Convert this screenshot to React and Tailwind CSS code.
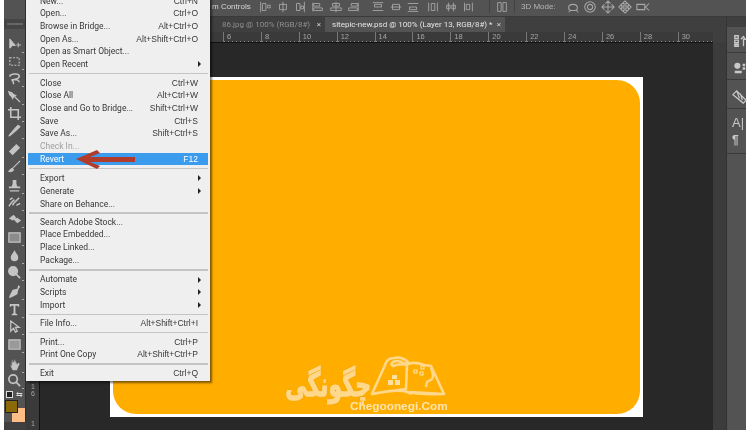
const menuGroups = [
  { gap: 5.8, rows: [['New...', 'Ctrl+N'], ['Open...', 'Ctrl+O'], ['Browse in Bridge...', 'Alt+Ctrl+O'], ['Open As...', 'Alt+Shift+Ctrl+O'], ['Open as Smart Object...'], ['Open Recent', null, true]] },
  { gap: 6.8, rows: [['Close', 'Ctrl+W'], ['Close All', 'Alt+Ctrl+W'], ['Close and Go to Bridge...', 'Shift+Ctrl+W'], ['Save', 'Ctrl+S'], ['Save As...', 'Shift+Ctrl+S'], ['Check In...', null, false, 'off'], ['Revert', 'F12', false, 'on']] },
  { gap: 5.5, rows: [['Export', null, true], ['Generate', null, true], ['Share on Behance...']] },
  { gap: 7, rows: [['Search Adobe Stock...'], ['Place Embedded...'], ['Place Linked...'], ['Package...']] },
  { gap: 5.8, rows: [['Automate', null, true], ['Scripts', null, true], ['Import', null, true]] },
  { gap: 5.6, rows: [['File Info...', 'Alt+Shift+Ctrl+I']] },
  { gap: 6.2, rows: [['Print...', 'Ctrl+P'], ['Print One Copy', 'Alt+Shift+Ctrl+P']] },
  { gap: 0, rows: [['Exit', 'Ctrl+Q']] },
];

const tools = [
  <path d="M3 2v10l3-3h3zM12 6v5M10 8.5h5" fill="currentColor" stroke="currentColor" strokeWidth="1" />,
  <path d="M3 4h10v8H3z" fill="none" stroke="currentColor" strokeDasharray="2 1.5" strokeWidth="1.2" />,
  <path d="M3 6c0-3 9-4 10-1s-6 5-8 4M5 9c1 2 2 2 2 5M8 9c2 0 5 1 5 3" fill="none" stroke="currentColor" strokeWidth="1.6" />,
  <path d="M2 3l3 1 2 2 2 1-2 1-1 2-1-2-2-2zM8 8l6 6" fill="currentColor" stroke="currentColor" strokeWidth="1.4" />,
  <path d="M4 1v11h11M1 4h11v11" fill="none" stroke="currentColor" strokeWidth="1.7" />,
  <path d="M12 2l2 2-3 3-2-2zM9 5l-6 7-1 2 2-1 7-6" fill="currentColor" stroke="currentColor" strokeWidth="1" />,
  <path d="M10 2l4 4-8 8-4-4z" fill="currentColor" />,
  <path d="M14 2L7 9l-1 1M6 10c-2 0-2 2-4 3 2 1 5 0 5-2" fill="currentColor" stroke="currentColor" strokeWidth="1.2" />,
  <path d="M6 2h4v4l1 3h3v2H2V9h3l1-3zM3 13h10v1.500H3z" fill="currentColor" />,
  <path d="M2 12c2-3 3-5 6-7M13 3L7 9l-1 2M3 5l3-2M10 11l4-2" fill="none" stroke="currentColor" strokeWidth="1.6" />,
  <path d="M2 7l5-4 3 3-4 3zM7 8l4-2 4 3-4 3z" fill="currentColor" />,
  <path d="M2 3h12v10H2z" fill="#8b8b8b" stroke="currentColor" strokeWidth="1.3" />,
  <path d="M8 2c1 3 4 5 4 8a4 4 0 01-8 0c0-3 3-5 4-8z" fill="currentColor" />,
  <path d="M6.500 2a4.500 4.500 0 110 9 4.500 4.500 0 010-9zM10 10l4 4" fill="currentColor" stroke="currentColor" strokeWidth="1.8" />,
  <path d="M12 1l2 2-2 3-1 5-6 3-3 1 1-3 3-6 5-1z" fill="currentColor" />,
  <path d="M3 2h10v3h-1l-1-1H9v8l2 1v1H5v-1l2-1V4H5L4 5H3z" fill="currentColor" />,
  <path d="M4 2v11l3-3 2 4 2-1-2-4h4z" fill="none" stroke="currentColor" strokeWidth="1.300" />,
  <path d="M2 3h12v10H2z" fill="#9a9a9a" stroke="currentColor" strokeWidth="1.200" />,
  <path d="M3 8l2 2V4l1 3V2l1.500 5V2L9 7V3l1.500 5 2-2 1 1-3 7H6z" fill="currentColor" />,
  <path d="M6.500 2a4.500 4.500 0 110 9 4.500 4.500 0 010-9zM10 10l4 4" fill="none" stroke="currentColor" strokeWidth="1.800" />,
];

const toolGaps = ['mt-[7px]', 'mt-[0px]', 'mt-[0px]', 'mt-[1px]', 'mt-[0px]', 'mt-[0px]', 'mt-[2px]', 'mt-[0px]', 'mt-[2px]', 'mt-[0px]', 'mt-[0px]', 'mt-[1px]', 'mt-[1px]', 'mt-[0px]', 'mt-[2px]', 'mt-[1px]', 'mt-[0px]', 'mt-[1px]', 'mt-[3px]', 'mt-[-1px]'];

const rulerMarks = [6, 8, 10, 12, 14, 16, 18, 20, 22, 24, 26, 28, 30];

const alignGroups = [
  { cls: 'ml-[10px]', icons: ['M3 2v12M5 4h4v8H5zM11 6h3v3h-3z', 'M8 2v12M4 5h8v6H4z', 'M13 2v12M4 4h4v8H4zM9 7h3v3H9z'] },
  { cls: 'ml-[4px]', icons: ['M2 3v10M3 4h7v3H3zM3 9h10v3H3z', 'M8 2v12M4 4h8v3H4zM2 9h12v3H2z', 'M14 3v10M6 4h7v3H6zM3 9h10v3H3z'] },
  { cls: 'ml-[11px]', icons: ['M2 3h12M4 5h8v3H4zM2 12h12', 'M2 8h12M4 5h8v6H4z', 'M2 13h12M4 8h8v3H4zM2 4h12'] },
  { cls: 'ml-[6px]', icons: ['M3 3v10M6 4h4v8H6zM13 3v10', 'M5 3v10M11 3v10M3 6h4v4H3zM9 6h4v4H9z', 'M13 3v10M4 3v10M6 5h4v6H6z'] },
];

const threeDIcons = [
  'M3 9c0-3 3-4 5-4 3 0 5 1 5 4s-3 3-5 3-5 0-5-3zM11 11l3 3M5 12l-2 2',
  'M8 2a6 6 0 110 12A6 6 0 018 2zM8 5a3 3 0 110 6 3 3 0 010-6z',
  'M8 1v14M1 8h14M5 4l3-3 3 3M5 12l3 3 3-3M4 5L1 8l3 3M12 5l3 3-3 3',
  'M8 1l3 3H9v3h3V5l3 3-3 3V9H9v3h2l-3 3-3-3h2V9H4v2L1 8l3-3v2h3V4H5z',
  'M1 5h9v6H1zM15 4l-4 4 4 4',
];

function ToolIcon({ children, mt }) {
  return (
    <div className={`relative flex h-[17px] w-[18px] items-center justify-center text-[#c4c4c4] ${mt}`}>
      <svg viewBox="0 0 16 16" className="h-[15px] w-[15px]">{children}</svg>
      <span className="absolute bottom-0 right-0 h-[1px] w-[2px] bg-[#aaaaaa]" />
    </div>
  );
}

function ToolPanel() {
  return (
    <div className="flex w-[22px] shrink-0 flex-col items-center border-r border-[#2e2e2e] bg-[#535353] pt-[19px]">
      <div className="flex h-[10px] w-full items-start bg-[#454545]">
        <div className="mt-[4px] ml-[3px] h-[2px] w-[16px] bg-[#666666]" />
      </div>
      {tools.map((tool, i) => (
        <ToolIcon key={i} mt={toolGaps[i] || ''}>{tool}</ToolIcon>
      ))}
      <div className="mt-[2px] flex w-full justify-between px-[2px] text-[#dddddd]">
        <span className="h-[7px] w-[7px] border border-[#dddddd] bg-[#222222]" />
        <span className="text-[8px] leading-[8px]">⇆</span>
      </div>
      <div className="relative mt-[1px] h-[22px] w-[20px]">
        <span className="absolute left-[7px] top-[8px] h-[14px] w-[13px] bg-[#ffbe85]" />
        <span className="absolute left-0 top-0 h-[13px] w-[13px] border border-[#222222] bg-[#8a6a06]" />
      </div>
    </div>
  );
}

function MenuRow({ label, shortcut, sub, state }) {
  const on = state === 'on';
  return (
    <div className={`mx-[2px] flex h-[12.7px] items-center justify-between pl-[12px] pr-[10px] text-[8.5px] leading-none ${on ? 'bg-[#3b9cee] text-white' : state === 'off' ? 'text-[#a0a0a0]' : 'text-[#383838]'}`}>
      <span className="font-['Roboto',sans-serif]">{label}</span>
      {shortcut && <span>{shortcut}</span>}
      {sub && <span className="mr-[-3px] h-0 w-0 border-y-[3px] border-l-[3px] border-y-transparent border-l-[#222222]" />}
    </div>
  );
}

function FileMenu() {
  return (
    <div className="absolute left-[22px] top-[-5.5px] z-10 w-[184px] bg-[#efefef] pb-[1px] font-['Liberation_Sans',sans-serif] shadow-[2px_2px_2px_rgba(0,0,0,0.5)]">
      {menuGroups.map((group, i) => (
        <div key={i}>
          {group.rows.map(([label, shortcut, sub, state]) => (
            <MenuRow key={label} label={label} shortcut={shortcut} sub={sub} state={state} />
          ))}
          {group.gap > 0 && (
            <div className="flex items-center pl-[3px] pr-[2px]" style={{ height: group.gap }}>
              <div className="h-[1.5px] w-full bg-[#c4c4c4]" />
            </div>
          )}
        </div>
      ))}
      <svg viewBox="0 0 62 22" className="absolute left-[49px] top-[154px] h-[22px] w-[62px]">
        <path d="M1 10L22 1l3 3-10 4h45v5H15l10 4-3 3z" fill="#b23c2b" />
      </svg>
    </div>
  );
}

function OptionsBar() {
  return (
    <div className="flex h-[17px] shrink-0 items-center border-b border-[#3a3a3a] bg-[#535353] pb-[3px] pl-[208px] font-['Liberation_Sans',sans-serif] text-[#d6d6d6]">
      <span className="w-[36px] shrink-0 whitespace-nowrap text-[8px] leading-none">m Controls</span>
      {alignGroups.map((group, i) => (
        <div key={i} className={`flex gap-[3.500px] text-[#a8a8a8] ${group.cls}`}>
          {group.icons.map(d => <AlignIcon key={d} d={d} />)}
        </div>
      ))}
      <div className="ml-[14px] flex h-full items-center border-x border-[#424242] px-[5px] text-[#a8a8a8]">
        <AlignIcon d="M3 3h4v10H3zM9 3h4v10H9z" />
      </div>
      <span className="ml-[6px] whitespace-nowrap text-[8px] leading-none text-[#b4b4b4]">3D Mode:</span>
      <div className="ml-[10px] flex gap-[3.500px] text-[#a8a8a8]">
        {threeDIcons.map(d => (
          <svg key={d} viewBox="0 0 16 16" className="h-[14px] w-[14px]"><path d={d} fill="none" stroke="currentColor" strokeWidth="1.200" /></svg>
        ))}
      </div>
    </div>
  );
}

function AlignIcon({ d }) {
  return (
    <svg viewBox="0 0 16 16" className="h-[14px] w-[14px] shrink-0">
      <path d={d} fill="none" stroke="currentColor" strokeWidth="1" />
    </svg>
  );
}

function TabBar() {
  return (
    <div className="flex h-[15px] shrink-0 items-stretch bg-[#3f3f3f] pl-[214px] font-['Roboto',sans-serif] text-[8px] leading-none">
      <div className="flex w-[107px] items-center justify-between pl-[4px] pr-[4px] text-[#8f8f8f]">
        <span className="whitespace-nowrap">86.jpg @ 100% (RGB/8#)</span>
        <span className="text-[#d0d0d0]">×</span>
      </div>
      <div className="flex w-[180px] items-center justify-between bg-[#535353] pl-[7px] pr-[4px] text-[#e4e4e4]">
        <span className="whitespace-nowrap">sitepic-new.psd @ 100% (Layer 13, RGB/8#) *</span>
        <span className="text-[#d0d0d0]">×</span>
      </div>
    </div>
  );
}

function Ruler() {
  return (
    <div className="mr-[13px] flex h-[11px] shrink-0 items-end overflow-hidden border-b border-[#111111] bg-[#3a3a3a] pl-[219px] font-['Liberation_Sans',sans-serif]">
      {rulerMarks.map(n => (
        <div key={n} className="relative h-full w-[37.9px] shrink-0 border-l border-[#777777]">
          <span className="absolute left-[3px] top-[1px] text-[7.500px] leading-none text-[#a6a6a6]">{n}</span>
          <span className="absolute bottom-0 left-0 h-[1px] w-full bg-[repeating-linear-gradient(90deg,#8a8a8a_0,#8a8a8a_1px,transparent_1px,transparent_4px)]" />
        </div>
      ))}
    </div>
  );
}

function VerticalRuler() {
  return (
    <div className="flex w-[14px] shrink-0 flex-col gap-[23px] border-r border-[#111111] bg-[#3a3a3a] pl-[5px] pt-[340px] text-[7px] leading-[7px] text-[#a6a6a6]">
      <span>1<br />6</span>
      <span>1</span>
    </div>
  );
}

function Logo() {
  return (
    <div className="absolute left-[173px] top-[269px] h-[72px] w-[164px]">
      <svg viewBox="0 0 164 72" className="absolute inset-0 h-full w-full">
        {/* book pages and reader */}
        <path d="M89 48L102 19c1-4 4-7 9-7 5-1 10 0 14 4l-3 2c-4-3-8-4-12-2-2 1-2 3 0 4 5-2 10-2 14-1l-1 24-29 4zM125 18c5-2 11-1 16 1l7 1 13 28-34-2c3 2 0 2-3 0l-3-2M89 48c12-2 24-5 36-2 12 3 24 2 36 2" fill="none" stroke="#ffd88c" strokeWidth="2.600" strokeLinejoin="round" />
        <path d="M148 22c2 5 3 8 1 11l-5 3-1 5" fill="none" stroke="#ffd88c" strokeWidth="2.400" />
        {/* squares on the pages */}
        <path d="M109 29h5v4h-5zM105 34h5v5h-5zM112 34h5v5h-5z" fill="#ffe0a3" />
        <path d="M138 20h3v3h-3zM131 24h3v3h-3zM137 26h3v3h-3z" fill="none" stroke="#ffe0a3" strokeWidth="1.200" />
      </svg>
      <span dir="rtl" className="absolute right-[76px] top-[28px] origin-center scale-y-[1.5] whitespace-nowrap font-['DejaVu_Sans',sans-serif] text-[22px] font-bold leading-none text-[#ffd88c] [-webkit-text-stroke:0.9px_#ffd88c] [text-shadow:0_0_1.500px_#c98a00]">چگونگی</span>
      <span className="absolute bottom-[5px] left-[67px] whitespace-nowrap font-['Liberation_Sans',sans-serif] text-[11.800px] font-bold leading-none text-[#ffe4ad]">Chegoonegi.Com</span>
    </div>
  );
}

function Canvas() {
  return (
    <div className="flex min-w-0 flex-1 flex-col bg-[#282828] pl-[70px] pt-[34px]">
      <div className="relative h-[340px] w-[533px] bg-white p-[3px]">
        <div className="h-full w-full rounded-[23px] bg-[#ffae00]" />
        <Logo />
      </div>
    </div>
  );
}

function DockPanel() {
  return (
    <div className="flex w-[20px] shrink-0 flex-col border-l border-[#333333] bg-[#535353] text-[#c8c8c8]">
      <div className="h-[10px] bg-[#3f3f3f]" />
      <div className="flex h-[26px] flex-col items-start border-b border-[#3a3a3a] pl-[6px] pt-[7px]">
        <svg viewBox="0 0 16 16" className="h-[14px] w-[14px]"><path d="M2 2h4v3H2zM2 7h4v3H2zM2 12h4v2H2zM9 6l3-3 2 3h-2v8" fill="none" stroke="currentColor" strokeWidth="1.500" /></svg>
      </div>
      <div className="flex h-[27px] flex-col items-start border-b border-[#3a3a3a] pl-[6px] pt-[8px]">
        <svg viewBox="0 0 16 16" className="h-[14px] w-[14px]"><path d="M5 2a3 3 0 110 7 3 3 0 010-7zM2 11h8v3H2zM11 3h3v3h-3zM11 7h3v3h-3z" fill="currentColor" /></svg>
      </div>
      <div className="flex h-[29px] flex-col items-start border-b border-[#3a3a3a] pl-[5px] pt-[9px]">
        <svg viewBox="0 0 16 16" className="h-[15px] w-[15px]"><path d="M1 6l4-4 10 10-3 3zM5 2l3 8M9 5l2 7" fill="none" stroke="currentColor" strokeWidth="1.300" /></svg>
      </div>
      <div className="flex h-[45px] flex-col items-start border-b border-[#3a3a3a] pl-[5px] pt-[7px]">
        <span className="font-['Liberation_Sans',sans-serif] text-[13px] leading-[14px]">A|</span>
        <span className="mt-[4px] font-['Liberation_Sans',sans-serif] text-[12px] font-bold leading-[12px]">¶</span>
      </div>
    </div>
  );
}

export default function App() {
  return (
    <div className="flex h-[430px] w-[750px] overflow-hidden bg-white pl-[4px] pr-[4px] font-['Liberation_Sans',sans-serif] blur-[0.35px]">
      <div className="relative flex min-w-0 flex-1 flex-col bg-[#3f3f3f]">
        <OptionsBar />
        <div className="flex min-h-0 flex-1">
          <div className="flex min-w-0 flex-1 flex-col">
            <TabBar />
            <Ruler />
            <div className="flex min-h-0 flex-1">
              <div className="w-[22px] shrink-0" />
              <VerticalRuler />
              <Canvas />
              <div className="w-[13px] shrink-0 bg-[#3c3c3c]" />
            </div>
          </div>
          <DockPanel />
        </div>
        <div className="absolute left-0 top-0 h-full">
          <ToolPanel />
        </div>
        <FileMenu />
      </div>
    </div>
  );
}
